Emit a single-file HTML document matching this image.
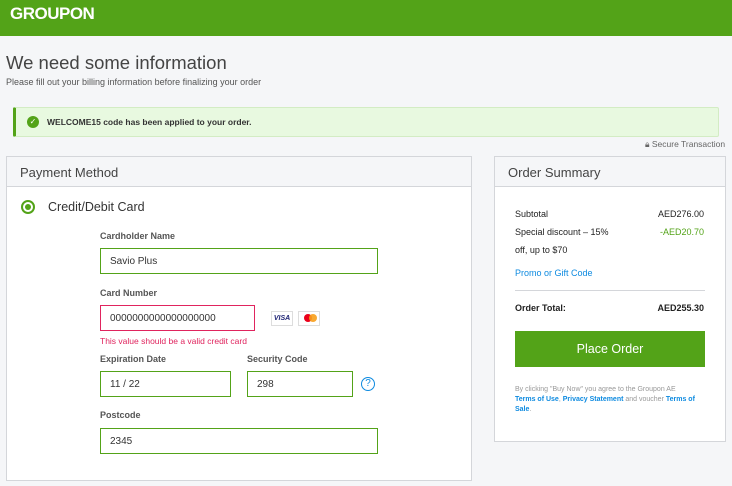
<!DOCTYPE html><html><head><style>
*{margin:0;padding:0;box-sizing:border-box}
body{width:732px;height:486px;background:#f5f6f8;font-family:"Liberation Sans",sans-serif;position:relative;overflow:hidden;color:#333}
.a{position:absolute;white-space:nowrap}
.hdr{left:0;top:0;width:732px;height:36px;background:#53a318}
.lbl{font-size:9px;font-weight:bold;color:#555}
.inp{border:1px solid #53a318;background:#fff;font-size:10px;padding-left:9px;line-height:26px;height:26px}
.panel{background:#fff;border:1px solid #d4d6da}
.ph{background:#f5f6f8;border-bottom:1px solid #d4d6da;height:30px;font-size:13px;color:#444;padding:8px 0 0 13px}
.r{font-size:9px;color:#222}
</style></head><body>
<div class="a hdr"></div>
<div class="a" style="left:10px;top:4px;font-size:17px;font-weight:bold;color:#fff;letter-spacing:-0.5px">GROUPON</div>
<div class="a" style="left:6px;top:52px;font-size:18.5px;color:#444">We need some information</div>
<div class="a" style="left:6px;top:77px;font-size:9px;color:#555">Please fill out your billing information before finalizing your order</div>
<div class="a" style="left:13px;top:107px;width:706px;height:30px;background:#e8f9e0;border:1px solid #d3ecc4;border-left:3px solid #53a318;border-radius:2px"></div>
<div class="a" style="left:27px;top:116px;width:12px;height:12px;border-radius:50%;background:#53a318;color:#fff;font-size:8px;text-align:center;line-height:12px">✓</div>
<div class="a" style="left:47px;top:117px;font-size:8.5px;font-weight:bold;color:#333">WELCOME15 code has been applied to your order.</div>
<div class="a" style="left:645px;top:139px;font-size:8.5px;color:#666">🔒︎ Secure Transaction</div>
<div class="a panel" style="left:6px;top:156px;width:466px;height:325px"><div class="ph">Payment Method</div></div>
<div class="a" style="left:21px;top:200px;width:14px;height:14px;border-radius:50%;border:2px solid #53a318;background:#fff"><div style="margin:2px;width:6px;height:6px;border-radius:50%;background:#53a318"></div></div>
<div class="a" style="left:48px;top:200px;font-size:12.5px;color:#333">Credit/Debit Card</div>
<div class="a lbl" style="left:100px;top:231px">Cardholder Name</div>
<div class="a inp" style="left:100px;top:248px;width:278px">Savio Plus</div>
<div class="a lbl" style="left:100px;top:288px">Card Number</div>
<div class="a inp" style="left:100px;top:305px;width:155px;border-color:#e0245e">0000000000000000000</div>
<div class="a" style="left:271px;top:311px;width:22px;height:15px;border:1px solid #ddd;font-size:7px;font-weight:bold;color:#1a1f71;text-align:center;line-height:13px;font-style:italic">VISA</div>
<div class="a" style="left:298px;top:311px;width:22px;height:15px;border:1px solid #ddd"><div style="position:absolute;left:5px;top:2px;width:8px;height:8px;border-radius:50%;background:#eb001b"></div><div style="position:absolute;left:10px;top:2px;width:8px;height:8px;border-radius:50%;background:#f79e1b;opacity:.9"></div></div>
<div class="a" style="left:100px;top:336px;font-size:8.5px;color:#e0245e">This value should be a valid credit card</div>
<div class="a lbl" style="left:100px;top:354px">Expiration Date</div>
<div class="a inp" style="left:100px;top:371px;width:131px">11 / 22</div>
<div class="a lbl" style="left:247px;top:354px">Security Code</div>
<div class="a inp" style="left:247px;top:371px;width:106px">298</div>
<div class="a" style="left:361px;top:377px;width:14px;height:14px;border-radius:50%;border:1px solid #0d8ae0;color:#0d8ae0;font-size:10px;text-align:center;line-height:12px">?</div>
<div class="a lbl" style="left:100px;top:410px">Postcode</div>
<div class="a inp" style="left:100px;top:428px;width:278px">2345</div>
<div class="a panel" style="left:494px;top:156px;width:232px;height:286px"><div class="ph">Order Summary</div></div>
<div class="a r" style="left:515px;top:209px">Subtotal</div>
<div class="a r" style="right:28px;top:209px">AED276.00</div>
<div class="a r" style="left:515px;top:227px">Special discount – 15%</div>
<div class="a r" style="right:28px;top:227px;color:#53a318">-AED20.70</div>
<div class="a r" style="left:515px;top:245px">off, up to $70</div>
<div class="a r" style="left:515px;top:268px;color:#0d8ae0">Promo or Gift Code</div>
<div class="a" style="left:515px;top:290px;width:190px;height:1px;background:#d4d6da"></div>
<div class="a r" style="left:515px;top:303px;font-weight:bold">Order Total:</div>
<div class="a r" style="right:28px;top:303px;font-weight:bold">AED255.30</div>
<div class="a" style="left:515px;top:331px;width:190px;height:36px;background:#53a318;color:#fff;font-size:12.5px;text-align:center;line-height:36px">Place Order</div>
<div class="a" style="left:515px;top:385px;font-size:7px;line-height:10px;color:#999;white-space:normal;width:182px">By clicking "Buy Now" you agree to the Groupon AE <b style="color:#0d8ae0">Terms of Use</b>, <b style="color:#0d8ae0">Privacy Statement</b> and voucher <b style="color:#0d8ae0">Terms of Sale</b>.</div>
</body></html>
